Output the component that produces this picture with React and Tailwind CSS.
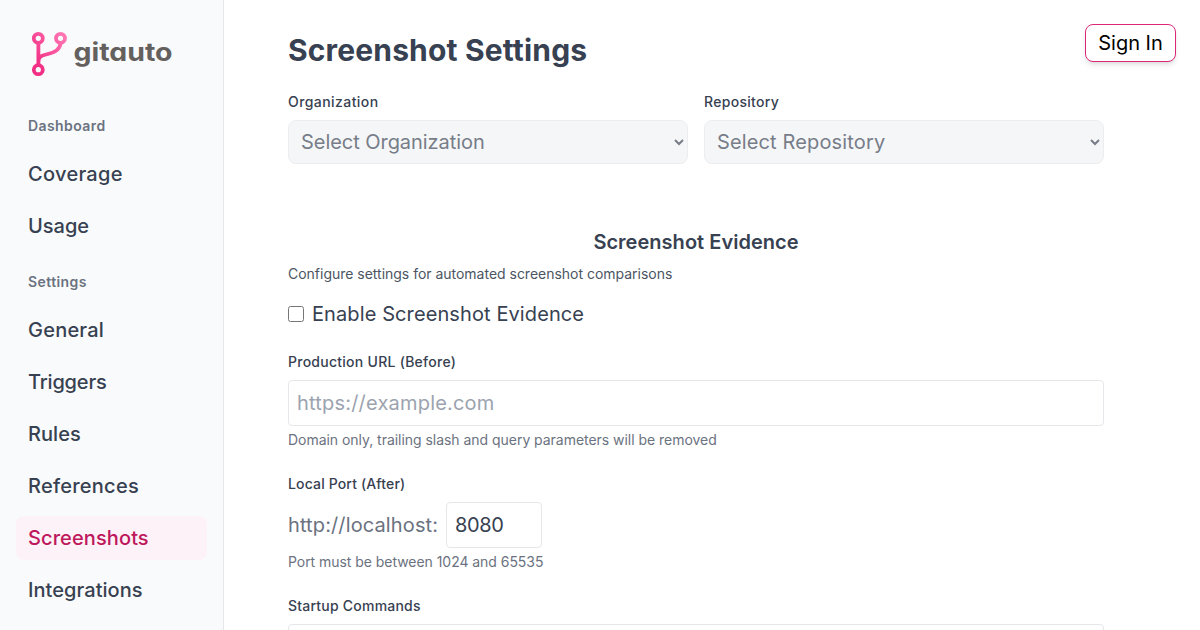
function Logo() {
  return (
    <svg className="h-12 w-[148px]" viewBox="0 0 148 48" fill="none">
      <defs>
        <linearGradient id="branch" x1="6" y1="30" x2="36" y2="8" gradientUnits="userSpaceOnUse">
          <stop offset="0" stopColor="#f22f85" />
          <stop offset="1" stopColor="#ff75b2" />
        </linearGradient>
      </defs>
      <g stroke="url(#branch)" strokeWidth="3.8">
        <circle cx="10.3" cy="9.3" r="4.5" />
        <circle cx="32.5" cy="9.3" r="4.5" />
        <circle cx="10.3" cy="40.7" r="4.5" />
        <path d="M10.4 14v22M10.4 33C10.4 27 14 26.5 20 25C27.5 23.2 32.3 20 32.5 14" />
      </g>
      <text x="45.5" y="32" fontFamily="Inter" fontWeight="700" fontSize="25.5" fill="#64605e" textLength="99" lengthAdjust="spacingAndGlyphs" className="[font-feature-settings:'cv11']">gitauto</text>
    </svg>
  );
}

const mainItems = [
  { name: "Coverage", tracking: "tracking-[0.3px]" },
  { name: "Usage", tracking: "tracking-normal" },
];

const settingsItems = [
  { name: "General", tracking: "tracking-[0.22px]" },
  { name: "Triggers", tracking: "tracking-[-0.18px]" },
  { name: "Rules", tracking: "tracking-[0.05px]" },
  { name: "References", tracking: "tracking-[0.25px]" },
  { name: "Screenshots", tracking: "tracking-[0.1px]" },
  { name: "Integrations", tracking: "tracking-[0.06px]" },
];

function NavGroup({ title, items, active }) {
  return (
    <div>
      <h3 className="px-3 text-sm leading-5 font-semibold tracking-[0.42px] text-[#6b7280]">{title}</h3>
      <ul className="mt-4 flex flex-col gap-2">
        {items.map(({ name, tracking }) => (
          <li
            key={name}
            className={`h-11 rounded-lg px-3 py-2 font-medium ${tracking} ${name === active ? "bg-[#fdf2f8] text-[#be185d]" : "text-[#374151]"}`}
          >
            {name}
          </li>
        ))}
      </ul>
    </div>
  );
}

function SelectField({ label, labelTracking, valueTracking }) {
  return (
    <div className="flex-1">
      <label className={`mb-2 block text-sm leading-5 font-medium ${labelTracking}`}>{label}</label>
      <select disabled className={`h-11 w-full rounded-lg border border-[#ebedef] bg-[#f5f6f8] px-2 text-[#777d88] opacity-100 ${valueTracking}`}>
        <option>Select {label}</option>
      </select>
    </div>
  );
}

export default function App() {
  return (
    <div className="flex h-[630px] overflow-hidden bg-white font-['Inter',sans-serif] text-xl leading-7 text-[#374151]">
      <aside className="w-56 shrink-0 border-r border-[#e5e7eb] bg-[#f9fafb] px-4 pt-[29px]">
        <div className="mb-[39px] ml-3"><Logo /></div>
        <div className="flex flex-col gap-6">
          <NavGroup title="Dashboard" items={mainItems} />
          <NavGroup title="Settings" items={settingsItems} active="Screenshots" />
        </div>
      </aside>
      <main className="ml-16 w-[816px] shrink-0 pt-8">
        <h1 className="mb-6 text-3xl leading-9 font-bold tracking-[0.16px]">Screenshot Settings</h1>
        <div className="flex gap-4">
          <SelectField label="Organization" labelTracking="tracking-[0.43px]" valueTracking="tracking-[-0.05px]" />
          <SelectField label="Repository" labelTracking="tracking-[0.3px]" valueTracking="tracking-[0.14px]" />
        </div>
        <h2 className="mt-16 text-center font-semibold tracking-[0.03px]">Screenshot Evidence</h2>
        <p className="mt-2 text-sm leading-5 tracking-[-0.015px] text-[#4b5563]">Configure settings for automated screenshot comparisons</p>
        <label className="mt-4 flex items-center gap-2 tracking-[0.1px]">
          <input type="checkbox" className="size-4" />
          Enable Screenshot Evidence
        </label>
        <label className="mt-6 mb-2 block text-sm leading-5 font-medium tracking-[0.26px]">Production URL (Before)</label>
        <input className="block h-[46px] w-full rounded-sm border border-[#e5e7eb] p-2 tracking-[0.2px] placeholder:text-[#9ca3af]" placeholder="https://example.com" />
        <p className="mt-1 text-sm leading-5 tracking-[-0.035px] text-[#6b7280]">Domain only, trailing slash and query parameters will be removed</p>
        <label className="mt-6 mb-2 block text-sm leading-5 font-medium tracking-[0.15px]">Local Port (After)</label>
        <div className="flex items-center gap-2 text-[#6b7280]">
          <span className="w-[150px] tracking-[0.12px]">http://localhost:</span>
          <input className="h-[46px] w-24 rounded-sm border border-[#e5e7eb] p-2 tracking-[-0.4px] text-[#374151]" defaultValue="8080" />
        </div>
        <p className="mt-1 text-sm leading-5 tracking-[-0.045px] text-[#6b7280]">Port must be between 1024 and 65535</p>
        <label className="mt-6 mb-2 block text-sm leading-5 font-medium tracking-[0.22px]">Startup Commands</label>
        <textarea className="block h-24 w-full rounded-sm border border-[#e5e7eb] p-2" />
      </main>
      <div className="flex min-w-0 flex-1 justify-end pt-6 pr-6">
        <button className="-ml-20 h-[38px] w-[91px] shrink-0 rounded-lg border border-[#db2777] bg-white text-black shadow-md">Sign In</button>
      </div>
    </div>
  );
}
